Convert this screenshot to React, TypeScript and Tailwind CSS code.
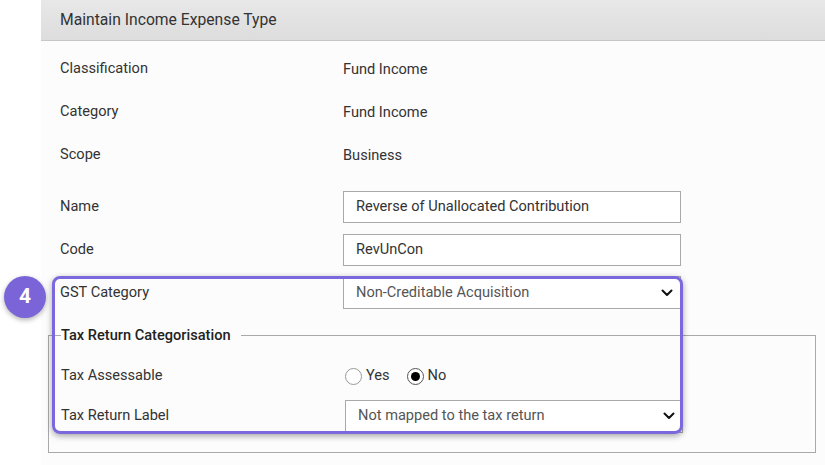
import React from 'react';

const Chevron = () => (
  <svg width="12" height="8" viewBox="0 0 12 8" className="absolute right-[7px] top-1/2 -translate-y-1/2 pointer-events-none">
    <path d="M1.5 1.5 L6 6 L10.5 1.5" fill="none" stroke="#111" strokeWidth="2" strokeLinecap="round" strokeLinejoin="round" />
  </svg>
);

const Select = ({ value }: { value: string }) => (
  <div className="relative w-[338px] h-[33px] border border-[#a9a9a9] bg-white">
    <div className="h-full flex items-center pl-[12px] text-[14.6px] text-[#555]">{value}</div>
    <Chevron />
  </div>
);

const TextInput = ({ value }: { value: string }) => (
  <div className="w-[338px] h-[32px] border border-[#a9a9a9] bg-white flex items-center pl-[12px] text-[14.6px] text-[#333]">
    {value}
  </div>
);

const Radio = ({ checked, label }: { checked?: boolean; label: string }) => (
  <label className="flex items-center gap-[4px]">
    <span
      className={`w-[17px] h-[17px] rounded-full border bg-white flex items-center justify-center ${
        checked ? 'border-[#555]' : 'border-[#999]'
      }`}
    >
      {checked && <span className="w-[9px] h-[9px] rounded-full bg-black" />}
    </span>
    <span className="text-[14.6px] text-[#333]">{label}</span>
  </label>
);

const Row = ({ label, children, className = 'h-[43px]' }: { label: string; children: React.ReactNode; className?: string }) => (
  <div className={`flex items-center ${className}`}>
    <div className="w-[283px] text-[14.6px] text-[#333]">{label}</div>
    <div>{children}</div>
  </div>
);

export default function App() {
  return (
    <div className="relative w-[825px] h-[465px] bg-white overflow-hidden" style={{ fontFamily: 'Roboto, "Liberation Sans", sans-serif' }}>
      <div className="ml-[41px] h-full flex flex-col">
        {/* Header */}
        <div className="h-[41px] flex items-center pl-[19px] bg-gradient-to-b from-[#e8e8e8] to-[#dddddd] border-b border-[#c6c6c6]">
          <span className="text-[15.7px] text-[#333]">Maintain Income Expense Type</span>
        </div>

        {/* Body */}
        <div className="flex-1 bg-[#fcfcfc] pt-[6px]">
          <div className="pl-[19px]">
            <Row label="Classification">
              <span className="text-[14.6px] text-[#333]">Fund Income</span>
            </Row>
            <Row label="Category">
              <span className="text-[14.6px] text-[#333]">Fund Income</span>
            </Row>
            <Row label="Scope">
              <span className="text-[14.6px] text-[#333]">Business</span>
            </Row>
            <div className="h-[9px]" />
            <Row label="Name">
              <TextInput value="Reverse of Unallocated Contribution" />
            </Row>
            <Row label="Code">
              <TextInput value="RevUnCon" />
            </Row>
            <Row label="GST Category">
              <Select value="Non-Creditable Acquisition" />
            </Row>
          </div>

          <fieldset className="ml-[7px] mr-[9px] mt-[11px] border border-[#a9a9a9] px-[12px] pb-[17px]">
            <legend className="pr-[10px] text-[14.6px] font-medium text-[#222]">Tax Return Categorisation</legend>
            <div className="mt-[8px]">
              <Row label="Tax Assessable" className="h-[43px]">
                <div className="flex items-center gap-[17px] ml-[1px]">
                  <Radio label="Yes" />
                  <Radio label="No" checked />
                </div>
              </Row>
              <Row label="Tax Return Label" className="h-[37px]">
                <div className="ml-[1px]">
                  <Select value="Not mapped to the tax return" />
                </div>
              </Row>
            </div>
          </fieldset>
        </div>
      </div>

      {/* Highlight overlay */}
      <div className="absolute left-[52px] top-[276px] w-[631px] h-[158px] rounded-[8px] border-[3px] border-[#7b68dc] shadow-[0_2px_6px_rgba(0,0,0,0.35)] pointer-events-none" />
      <div className="absolute left-[4px] top-[276px] w-[42px] h-[42px] rounded-full bg-[#7b64d8] flex items-center justify-center text-white text-[21px] font-bold shadow-[0_2px_5px_rgba(0,0,0,0.3)]">
        4
      </div>
    </div>
  );
}
